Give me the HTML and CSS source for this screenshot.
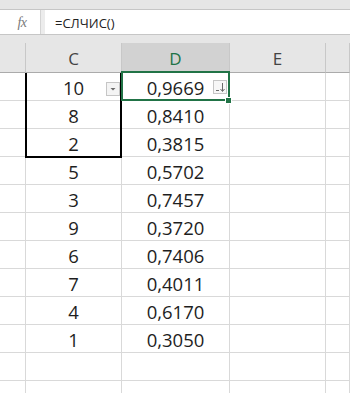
FILE: index.html
```html
<!DOCTYPE html>
<html>
<head>
<meta charset="utf-8">
<link rel="stylesheet" href="styles.css">
</head>
<body>
<div class="top-strip"></div>
<div class="formula-bar">
  <div class="fx-box"><span class="fx">fx</span></div>
  <div class="fx-gap"></div>
  <div class="formula-input">=СЛЧИС()</div>
</div>
<div class="gap"></div>
<div class="sheet">
  <div class="row head">
    <div class="cell"></div>
    <div class="cell">C</div>
    <div class="cell sel">D</div>
    <div class="cell">E</div>
    <div class="cell"></div>
  </div>
  <div class="row">
    <div class="cell"></div>
    <div class="cell num">10<span class="dd"><svg width="12" height="12" viewBox="0 0 12 12"><path d="M3.5 5 L8.5 5 L6 7.5 Z" fill="#6a6a6a"/></svg></span></div>
    <div class="cell num">0,9669<span class="af"><svg width="12" height="12" viewBox="0 0 12 12"><path d="M2 9.5 H5" stroke="#6a6a6a" stroke-width="1"/><path d="M8.5 2 V10" stroke="#6a6a6a" stroke-width="1"/><path d="M6.5 8 L8.5 10.5 L10.5 8" fill="none" stroke="#6a6a6a" stroke-width="1"/></svg></span></div>
    <div class="cell"></div>
    <div class="cell"></div>
  </div>
  <div class="row"><div class="cell"></div><div class="cell num">8</div><div class="cell num">0,8410</div><div class="cell"></div><div class="cell"></div></div>
  <div class="row"><div class="cell"></div><div class="cell num">2</div><div class="cell num">0,3815</div><div class="cell"></div><div class="cell"></div></div>
  <div class="row"><div class="cell"></div><div class="cell num">5</div><div class="cell num">0,5702</div><div class="cell"></div><div class="cell"></div></div>
  <div class="row"><div class="cell"></div><div class="cell num">3</div><div class="cell num">0,7457</div><div class="cell"></div><div class="cell"></div></div>
  <div class="row"><div class="cell"></div><div class="cell num">9</div><div class="cell num">0,3720</div><div class="cell"></div><div class="cell"></div></div>
  <div class="row"><div class="cell"></div><div class="cell num">6</div><div class="cell num">0,7406</div><div class="cell"></div><div class="cell"></div></div>
  <div class="row"><div class="cell"></div><div class="cell num">7</div><div class="cell num">0,4011</div><div class="cell"></div><div class="cell"></div></div>
  <div class="row"><div class="cell"></div><div class="cell num">4</div><div class="cell num">0,6170</div><div class="cell"></div><div class="cell"></div></div>
  <div class="row"><div class="cell"></div><div class="cell num">1</div><div class="cell num">0,3050</div><div class="cell"></div><div class="cell"></div></div>
  <div class="row"><div class="cell"></div><div class="cell"></div><div class="cell"></div><div class="cell"></div><div class="cell"></div></div>
  <div class="row"><div class="cell"></div><div class="cell"></div><div class="cell"></div><div class="cell"></div><div class="cell"></div></div>
  <div class="copy-box"></div>
  <div class="active-box"></div>
  <div class="handle"></div>
</div>
</body>
</html>
```
FILE: styles.css
```css
html, body {
  margin: 0;
  padding: 0;
}
body {
  width: 350px;
  height: 393px;
  overflow: hidden;
  background: #e6e6e6;
  font-family: "Open Sans", "Liberation Sans", sans-serif;
}
.top-strip {
  height: 9px;
  background: #e6e6e6;
}
.formula-bar {
  display: flex;
  height: 24px;
  border-top: 1px solid #c6c6c6;
  border-bottom: 1px solid #c6c6c6;
  background: #ffffff;
}
.fx-box {
  width: 40px;
  border-right: 1px solid #d4d4d4;
  display: flex;
  justify-content: center;
  align-items: center;
  background: #ffffff;
}
.fx {
  font-family: "Liberation Serif", "DejaVu Serif", serif;
  font-style: italic;
  font-size: 14px;
  color: #7a7a7a;
  letter-spacing: -0.5px;
  padding-left: 4px;
  padding-top: 1px;
}
.fx-gap {
  width: 4px;
  background: #ececec;
}
.formula-input {
  flex: 1;
  padding: 3px 0 0 10px;
  font-size: 13px;
  line-height: 21px;
  color: #222222;
}
.gap {
  height: 8px;
}
.sheet {
  position: relative;
  background: #ffffff;
}
.row {
  display: grid;
  grid-template-columns: 26px 96px 108px 96px 1fr;
  height: 28px;
}
.cell {
  position: relative;
  box-sizing: border-box;
  border-right: 1px solid #d9d9d9;
  border-bottom: 1px solid #d9d9d9;
  text-align: center;
}
.num {
  font-size: 18.5px;
  line-height: 24px;
  padding-top: 3px;
  color: #1e1e1e;
}
.head {
  height: 30px;
  background: #e6e6e6;
}
.head .cell {
  border-right: 1px solid #c8c8c8;
  border-bottom: 1px solid #ababab;
  font-size: 17px;
  line-height: 26px;
  padding-top: 3px;
  color: #444444;
}
.head .sel {
  background: #d2d2d2;
  color: #217346;
}
.dd, .af {
  position: absolute;
  top: 9px;
  width: 12px;
  height: 12px;
  border: 1px solid #c6c6c6;
  background: #f4f4f4;
  display: flex;
}
.dd {
  right: 1px;
}
.af {
  top: 7px;
  right: 2px;
  background: #f7f7f7;
}
.copy-box {
  position: absolute;
  left: 25px;
  top: 30px;
  width: 97px;
  height: 85px;
  box-sizing: border-box;
  border: 2px solid #000000;
  border-top: none;
}
.active-box {
  position: absolute;
  left: 121px;
  top: 28px;
  width: 109px;
  height: 30px;
  box-sizing: border-box;
  border: 2px solid #217346;
}
.handle {
  position: absolute;
  left: 225px;
  top: 54px;
  width: 5px;
  height: 5px;
  background: #217346;
  border: 1px solid #ffffff;
}
```
